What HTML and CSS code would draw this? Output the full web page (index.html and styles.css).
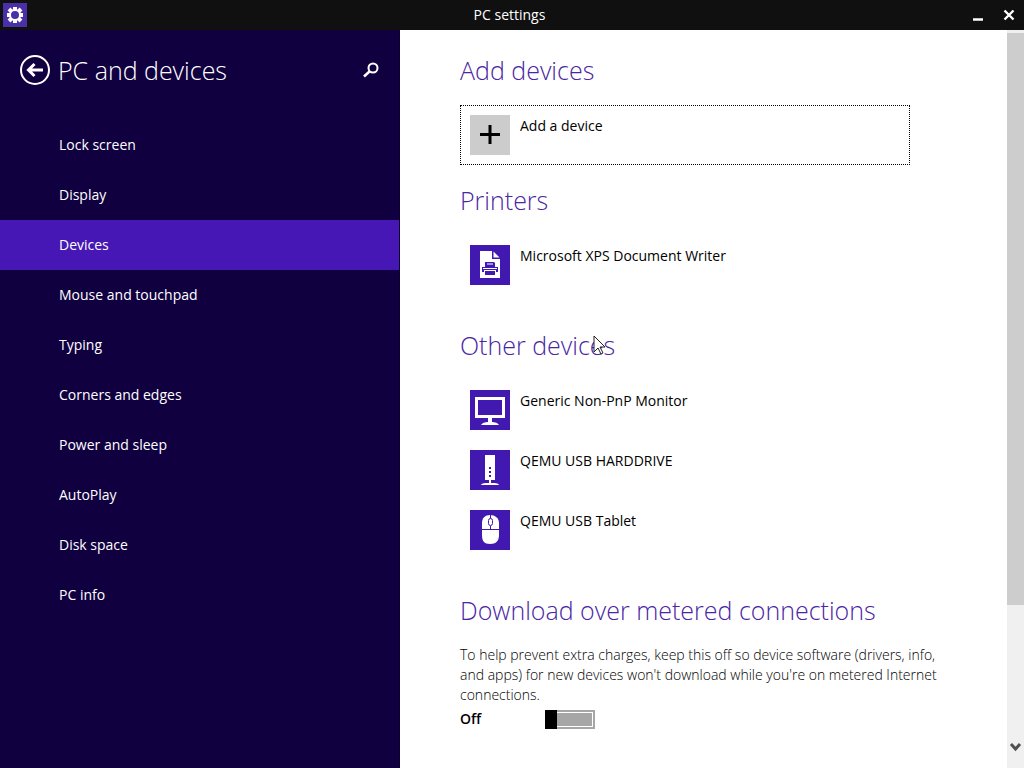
FILE: index.html
```
<!DOCTYPE html>
<html lang="en">
<head>
<meta charset="UTF-8">
<title>PC settings</title>
<link rel="stylesheet" href="styles.css">
</head>
<body>

	<header class="titlebar">
		<span class="app-icon">
			<svg width="24" height="24" viewBox="0 0 24 24">
				<g stroke="#fff" stroke-width="4">
					<path d="M12 4v16M4 12h16M6 6l12 12M18 6L6 18"/>
				</g>
				<circle cx="12" cy="12" r="6" fill="#fff"/>
				<circle cx="12" cy="12" r="4" fill="#4a2fa8"/>
			</svg>
		</span>
		<span class="app-title">PC settings</span>
		<span class="window-buttons">
			<button type="button" aria-label="Minimize">
				<svg width="14" height="14" viewBox="0 0 14 14"><path d="M2 11.500h10" stroke="#fff" stroke-width="2.500"/></svg>
			</button>
			<button type="button" aria-label="Close">
				<svg width="14" height="14" viewBox="0 0 14 14"><path d="M2.500 2.500l9 9M11.500 2.500l-9 9" stroke="#fff" stroke-width="2.400"/></svg>
			</button>
		</span>
	</header>

	<div class="container">

		<aside class="sidebar">
			<div class="sidebar-head">
				<button type="button" class="back" aria-label="Back">
					<svg width="30" height="30" viewBox="0 0 30 30" fill="none" stroke="#fff">
						<circle cx="15" cy="15" r="14" stroke-width="2"/>
						<path d="M23 15H9M14.500 9L8.500 15l6 6" stroke-width="3"/>
					</svg>
				</button>
				<h1>PC and devices</h1>
				<button type="button" class="search" aria-label="Search">
					<svg width="16" height="16" viewBox="0 0 16 16" fill="none" stroke="#fff">
						<circle cx="10" cy="6" r="4.500" stroke-width="2"/>
						<path d="M7 9L1 14.500" stroke-width="2.500"/>
					</svg>
				</button>
			</div>
			<nav>
				<ul>
					<li><a href="#">Lock screen</a></li>
					<li><a href="#">Display</a></li>
					<li><a href="#" class="active">Devices</a></li>
					<li><a href="#">Mouse and touchpad</a></li>
					<li><a href="#">Typing</a></li>
					<li><a href="#">Corners and edges</a></li>
					<li><a href="#">Power and sleep</a></li>
					<li><a href="#">AutoPlay</a></li>
					<li><a href="#">Disk space</a></li>
					<li><a href="#">PC info</a></li>
				</ul>
			</nav>
		</aside>

		<main class="content">

			<section class="add">
				<h2>Add devices</h2>
				<button type="button" class="device focused">
					<svg class="gray" width="40" height="40" viewBox="0 0 40 40"><path d="M20 10v19M10 19.500h20" stroke="#000" stroke-width="3"/></svg>
					<span>Add a device</span>
				</button>
			</section>

			<section>
				<h2>Printers</h2>
				<button type="button" class="device">
					<svg width="40" height="40" viewBox="0 0 40 40">
						<path d="M10 6h12v8h8v19H10z" fill="#fff"/>
						<path d="M23.500 6.500l6 6h-6z" fill="#fff"/>
						<g fill="#4118b0">
							<path d="M15 17h9l1 1v4H15z"/>
							<path d="M12 22h16v5h-2v-2H14v2h-2z"/>
							<path d="M15 26h10v4H15z"/>
						</g>
						<path d="M17 19h6M13 23.500h14" stroke="#fff" stroke-width="1"/>
					</svg>
					<span>Microsoft XPS Document Writer</span>
				</button>
			</section>

			<section>
				<h2>Other devices
					<!-- mouse pointer -->
					<svg class="pointer" width="14" height="21" viewBox="0 0 14 21"><path d="M1 1v16l4-4 3 6 2-1-3-6h5z" fill="#fff" stroke="#222"/></svg>
				</h2>
				<button type="button" class="device">
					<svg width="40" height="40" viewBox="0 0 40 40">
						<path d="M6.500 8.500h27v18h-27z" fill="none" stroke="#fff" stroke-width="3"/>
						<path d="M18 28h4v4c3 0 6 1 7 3H11c1-2 4-3 7-3z" fill="#fff"/>
					</svg>
					<span>Generic Non-PnP Monitor</span>
				</button>
				<button type="button" class="device">
					<svg width="40" height="40" viewBox="0 0 40 40">
						<path d="M15 5h10v25H15zM19 30h2v3h-2zM11 35c1-2 4-2 9-2s8 0 9 2z" fill="#fff"/>
						<path d="M19 17h2v2h-2zM19 21h2v2h-2zM19 25h2v2h-2z" fill="#4118b0"/>
					</svg>
					<span>QEMU USB HARDDRIVE</span>
				</button>
				<button type="button" class="device">
					<svg width="40" height="40" viewBox="0 0 40 40">
						<path d="M12 13c0-5 3-8 8-8s9 3 9 8v12c0 6-3 9-9 9s-8-3-8-9z" fill="#fff"/>
						<path d="M12 19.500h17M20.500 5v4M20.500 16v3" stroke="#4118b0"/>
						<rect x="18.500" y="8.500" width="4" height="7" rx="2" fill="#fff" stroke="#4118b0"/>
					</svg>
					<span>QEMU USB Tablet</span>
				</button>
			</section>

			<section>
				<h2>Download over metered connections</h2>
				<p>To help prevent extra charges, keep this off so device software (drivers, info, and apps) for new devices won't download while you're on metered Internet connections.</p>
				<div class="toggle-row">
					<label for="metered">Off</label>
					<input type="checkbox" id="metered" class="toggle">
				</div>
			</section>

		</main>

		<div class="scrollbar">
			<div class="thumb"></div>
			<div class="track"></div>
			<svg width="17" height="17" viewBox="0 0 17 17"><path d="M4 5l4.500 5L13 5" fill="none" stroke="#505050" stroke-width="3"/></svg>
		</div>

	</div>

</body>
</html>
```
FILE: styles.css
```
* {
	box-sizing: border-box;
}

body {
	display: flex;
	flex-direction: column;
	height: 100vh;
	margin: 0;
	overflow: hidden;
	font-family: "Open Sans", "Noto Sans", sans-serif;
	font-size: 14px;
	line-height: 20px;
	color: #000;
	background-color: #fff;
}

button {
	padding: 0;
	border: none;
	background: none;
	font: inherit;
	color: inherit;
}

svg {
	display: block;
}

h1, h2 {
	margin: 0;
	font-size: 25px;
	font-weight: 300;
	line-height: 36px;
	white-space: nowrap;
}

/* title bar */
.titlebar {
	display: grid;
	grid-template-columns: 1fr auto 1fr;
	align-items: center;
	flex: none;
	height: 30px;
	padding: 0 8px 0 3px;
	background-color: #101010;
	color: #fff;
}

.app-icon {
	width: 24px;
	background-color: #4a2fa8;
}

.window-buttons {
	display: flex;
	justify-content: flex-end;
	gap: 17px;
}

.container {
	display: flex;
	flex: 1;
	min-height: 0;
}

/* left menu */
.sidebar {
	width: 400px;
	flex: none;
	border-right: 1px solid #0c0030;
	background-color: #110040;
	color: #fff;
}

.sidebar-head {
	display: flex;
	align-items: center;
	height: 80px;
	margin-bottom: 10px;
	padding: 0 20px;
	gap: 8px;
}

.search {
	margin-left: auto;
}

.sidebar ul {
	margin: 0;
	padding: 0;
	list-style-type: none;
}

.sidebar a {
	display: block;
	padding: 15px 59px;
	color: #fff;
	text-decoration: none;
}

.sidebar a.active {
	background-color: #4617b4;
}

/* right side */
.content {
	flex: 1;
	min-width: 0;
	padding: 22px 40px 0 60px;
	overflow: hidden;
}

section {
	margin-bottom: 32px;
}

section.add {
	margin-bottom: 17px;
}

h2 {
	position: relative;
	margin-bottom: 17px;
	color: #4a26a4;
}

.device {
	display: flex;
	align-items: flex-start;
	gap: 10px;
	width: 100%;
	max-width: 450px;
	height: 60px;
	padding: 10px;
	line-height: 22px;
	text-align: left;
}

.device svg {
	flex: none;
	background-color: #4118b0;
}

.device svg.gray {
	background-color: #ccc;
}

.focused {
	padding: 9px;
	border: 1px dotted #000;
}

.pointer {
	position: absolute;
	left: 133px;
	top: 8px;
}

p {
	max-width: 490px;
	margin: 0;
	font-weight: 300;
}

.toggle-row {
	display: flex;
	align-items: center;
	margin-top: 4px;
}

.toggle-row label {
	width: 85px;
	font-weight: 600;
}

.toggle {
	appearance: none;
	width: 50px;
	height: 19px;
	margin: 0;
	background-color: #a6a6a6;
	box-shadow: inset 0 0 0 2px #a6a6a6, inset 0 0 0 3px #fff;
}

.toggle::before {
	content: "";
	display: block;
	width: 12px;
	height: 100%;
	background-color: #000;
}

.toggle:checked::before {
	margin-left: auto;
}

.scrollbar {
	display: flex;
	flex-direction: column;
	align-items: center;
	flex: none;
	width: 17px;
	padding: 3px 0 12px;
	background-color: #f0f0f0;
}

.thumb {
	flex: 81;
	width: 100%;
	background-color: #cdcdcd;
}

.track {
	flex: 19;
}
```
